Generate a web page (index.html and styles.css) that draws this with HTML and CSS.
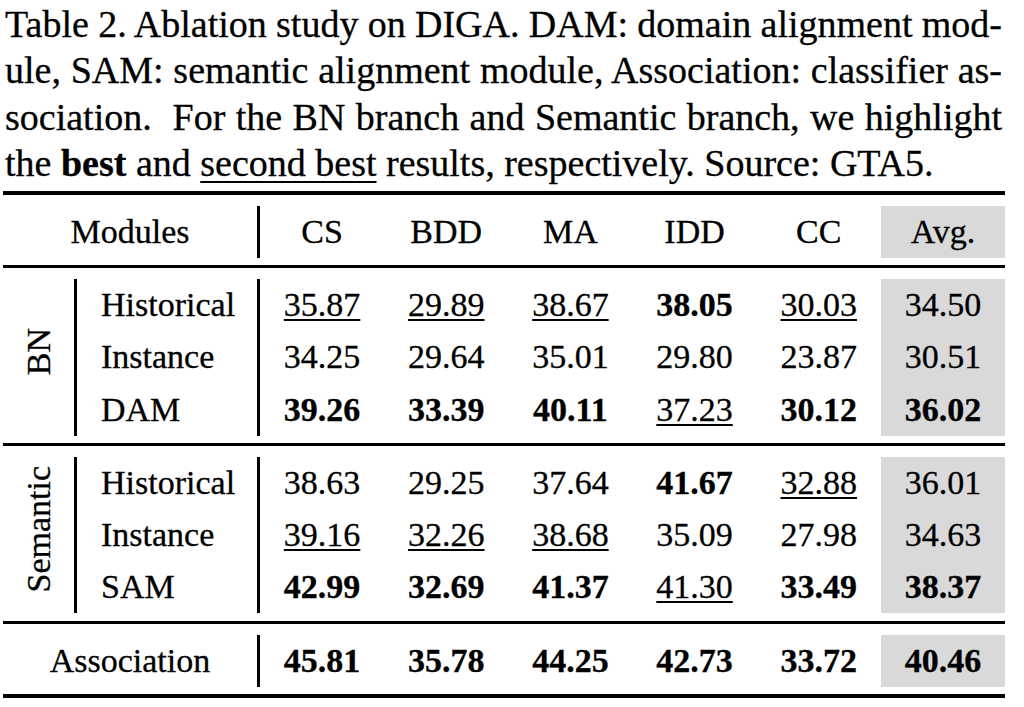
FILE: index.html
```html
<!DOCTYPE html>
<html lang="en">
<head>
<meta charset="utf-8">
<title>Table 2. Ablation study on DIGA</title>
<link rel="stylesheet" href="styles.css">
</head>
<body>
<div class="page">
  <p class="caption">
    <span class="line">Table 2. Ablation study on DIGA. DAM: domain alignment mod-</span>
    <span class="line">ule, SAM: semantic alignment module, Association: classifier as-</span>
    <span class="line">sociation.&nbsp; For the BN branch and Semantic branch, we highlight</span>
    <span class="line last">the <b>best</b> and <u>second best</u> results, respectively. Source: GTA5.</span>
  </p>

  <div class="table">
    <div class="section head">
      <div class="merged">Modules</div>
      <div class="num">CS</div>
      <div class="num">BDD</div>
      <div class="num">MA</div>
      <div class="num">IDD</div>
      <div class="num">CC</div>
      <div class="num avg">Avg.</div>
    </div>

    <div class="section bn">
      <div class="label"><span>BN</span></div>
      <div class="name">Historical</div>
      <div class="num"><u>35.87</u></div>
      <div class="num"><u>29.89</u></div>
      <div class="num"><u>38.67</u></div>
      <div class="num"><b>38.05</b></div>
      <div class="num"><u>30.03</u></div>
      <div class="num avg">34.50</div>

      <div class="name">Instance</div>
      <div class="num">34.25</div>
      <div class="num">29.64</div>
      <div class="num">35.01</div>
      <div class="num">29.80</div>
      <div class="num">23.87</div>
      <div class="num avg">30.51</div>

      <div class="name">DAM</div>
      <div class="num"><b>39.26</b></div>
      <div class="num"><b>33.39</b></div>
      <div class="num"><b>40.11</b></div>
      <div class="num"><u>37.23</u></div>
      <div class="num"><b>30.12</b></div>
      <div class="num avg"><b>36.02</b></div>
    </div>

    <div class="section sem">
      <div class="label"><span>Semantic</span></div>
      <div class="name">Historical</div>
      <div class="num">38.63</div>
      <div class="num">29.25</div>
      <div class="num">37.64</div>
      <div class="num"><b>41.67</b></div>
      <div class="num"><u>32.88</u></div>
      <div class="num avg">36.01</div>

      <div class="name">Instance</div>
      <div class="num"><u>39.16</u></div>
      <div class="num"><u>32.26</u></div>
      <div class="num"><u>38.68</u></div>
      <div class="num">35.09</div>
      <div class="num">27.98</div>
      <div class="num avg">34.63</div>

      <div class="name">SAM</div>
      <div class="num"><b>42.99</b></div>
      <div class="num"><b>32.69</b></div>
      <div class="num"><b>41.37</b></div>
      <div class="num"><u>41.30</u></div>
      <div class="num"><b>33.49</b></div>
      <div class="num avg"><b>38.37</b></div>
    </div>

    <div class="section assoc">
      <div class="merged">Association</div>
      <div class="num"><b>45.81</b></div>
      <div class="num"><b>35.78</b></div>
      <div class="num"><b>44.25</b></div>
      <div class="num"><b>42.73</b></div>
      <div class="num"><b>33.72</b></div>
      <div class="num avg"><b>40.46</b></div>
    </div>
  </div>
</div>
</body>
</html>
```

FILE: styles.css
```css
html, body {
  margin: 0;
  padding: 0;
  background: #ffffff;
}

body {
  color: #000000;
  font-family: "Liberation Serif", "Times New Roman", serif;
  -webkit-text-stroke: 0.3px #000000;
}

.page {
  width: 1002px;
  margin-left: 3px;
}

/* ---------- caption ---------- */
.caption {
  margin: 0 0 0 2px;
  padding-top: 1px;
  width: 997px;
  font-size: 38px;
  line-height: 46.3px;
}

.caption .line {
  display: block;
  text-align: justify;
  text-align-last: justify;
  word-spacing: -2px;
}

.caption .line.last {
  text-align: left;
  text-align-last: left;
  word-spacing: 0;
}

.caption u {
  text-decoration-thickness: 2px;
  text-underline-offset: 5px;
}

/* ---------- table ---------- */
.table {
  margin-top: 4.8px;
  border-top: 4px solid #000000;
}

.section {
  display: grid;
  grid-template-columns: 71px 186px repeat(6, 1fr);
  grid-auto-rows: 52px;
  padding: 11px 0 7px;
  border-bottom: 3px solid #000000;
  font-size: 34px;
  line-height: 1;
}

.section.bn {
  grid-auto-rows: 52.33px;
}

.section.sem {
  padding-bottom: 8px;
}

.section.assoc {
  border-bottom-width: 4px;
}

.num,
.merged,
.name {
  display: flex;
  align-items: center;
  white-space: nowrap;
}

.num,
.merged {
  justify-content: center;
}

.merged {
  grid-column: span 2;
  border-right: 3px solid #000000;
}

.name {
  justify-content: flex-start;
  padding-left: 24px;
  border-left: 3px solid #000000;
  border-right: 3px solid #000000;
}

.avg {
  background: #d9d9d9;
}

.num u {
  text-decoration-thickness: 2px;
  text-underline-offset: 3px;
}

.label {
  grid-row: span 3;
  grid-column: 1;
  display: flex;
  align-items: center;
  justify-content: center;
  padding-bottom: 12px;
}

.label span {
  writing-mode: vertical-rl;
  transform: rotate(180deg);
  line-height: 34px;
  white-space: nowrap;
}
```
